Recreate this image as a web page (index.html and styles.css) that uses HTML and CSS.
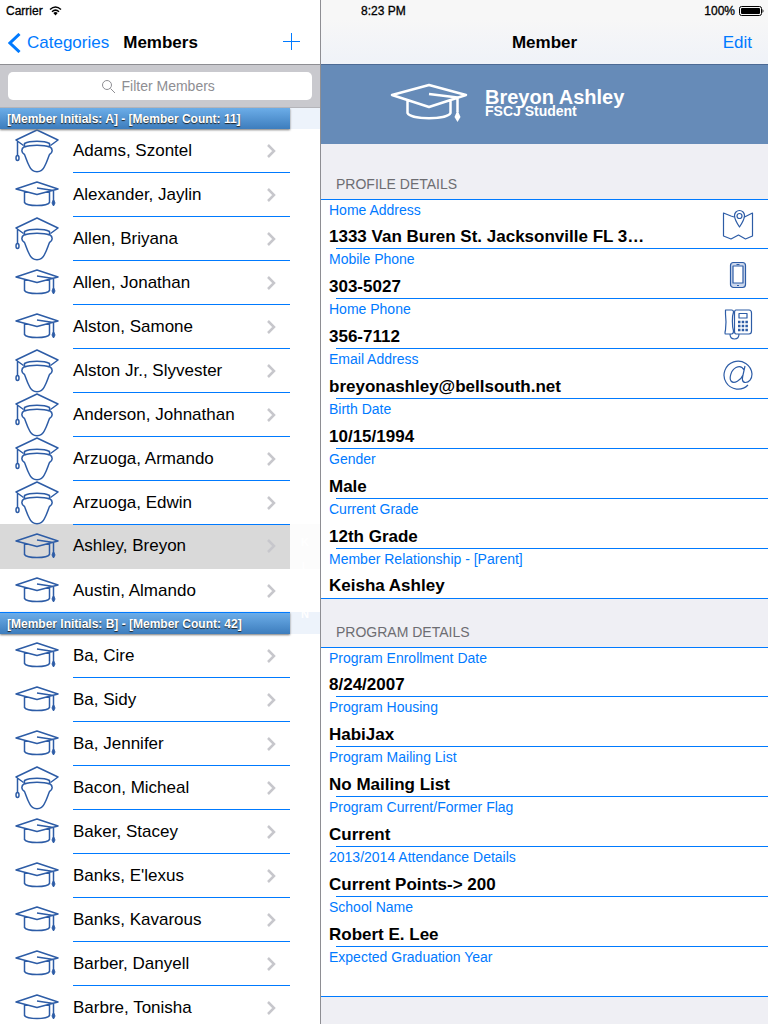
FILE: index.html
```html
<!DOCTYPE html>
<html lang="en">
<head>
<meta charset="utf-8">
<meta name="viewport" content="width=device-width, initial-scale=1">
<title>Members</title>
<link rel="stylesheet" href="styles.css">
</head>
<body>
<svg class="defs" aria-hidden="true">
  <symbol id="cap" viewBox="0 0 44 28">
    <path d="M1 8 22 1 43 8 22 13.500ZM9.500 10.500V21.500C12 25.500 32 25.500 34.500 21.500V10.500M22 7 38.500 9.500V20"/>
    <path class="solid" d="M38.500 18.500 37 22 38.500 25 40 22Z"/>
  </symbol>
  <symbol id="grad" viewBox="0 0 44 44">
    <path d="M8.500 16.500 1 11 22 1 43 11 35.500 16.500M9.500 18V14.500C15 11.500 29 11.500 34.500 14.500V18M9.500 18C15 15.500 29 15.500 34.500 18M9.500 17.500C5.500 20 6.500 24 9.500 25.500C11 29 12 33 14.500 37.500C17.500 44.500 26.500 44.500 29.500 37.500C32 33 33 29 34.500 25.500C37.500 24 38.500 20 34.500 17.500M2.500 12V26"/>
    <ellipse cx="2.500" cy="29" rx="1.500" ry="2.500"/>
  </symbol>
  <symbol id="chev" viewBox="0 0 10 14"><path d="M2 1 8 7 2 13"/></symbol>
</svg>
<div class="app">
  <aside class="master">
    <header class="bar">
      <div class="status"><span>Carrier</span>
        <svg class="wifi" width="13" height="10" viewBox="0 0 13 10"><path d="M1 3.500Q6.500-1.500 12 3.500M3 5.700Q6.500 2.500 10 5.700"/><path class="fill" d="M4.300 7Q6.500 5 8.700 7L6.500 9.500Z"/></svg>
      </div>
      <nav class="nav">
        <a class="back" href="#"><svg width="13" height="20" viewBox="0 0 13 20"><path d="M11.500 1 2 10 11.500 19"/></svg>Categories</a>
        <h1>Members</h1>
        <button class="add" type="button" aria-label="Add member"><svg width="18" height="18" viewBox="0 0 18 18"><path d="M9.500 1V18M1 9.500H18"/></svg></button>
      </nav>
    </header>
    <div class="search">
      <label class="field">
        <svg width="15" height="15" viewBox="0 0 15 15"><circle cx="6" cy="6" r="4.500"/><path d="M9.500 9.500 14 14"/></svg>
        <input type="search" placeholder="Filter Members" aria-label="Filter Members">
      </label>
    </div>
    <div class="members" id="members"></div>
    <div class="index"><a href="#">K</a><a href="#">L</a><a class="skip" href="#">N</a><a href="#">O</a></div>
  </aside>
  <main class="detail">
    <header class="bar">
      <div class="status"><span>8:23 PM</span>
        <span class="power">100%<svg width="25" height="10" viewBox="0 0 25 10"><rect class="outline" x=".5" y=".5" width="22" height="9" rx="2"/><rect x="2" y="2" width="19" height="6" rx="1"/><path d="M23.500 3Q25.500 5 23.500 7Z"/></svg></span>
      </div>
      <nav class="nav"><h1>Member</h1><button class="edit" type="button">Edit</button></nav>
    </header>
    <section class="hero">
      <svg class="hero-cap" viewBox="0 0 78 40"><path d="M2 12 39 2 76 12 39 24ZM17.500 17V30C21 37 57 37 60.500 30V17M39 11 67.500 14.500V29"/><path class="tassel" d="M67.500 27 64.500 34 67.500 39 70.500 34Z"/></svg>
      <div><h2>Breyon Ashley</h2><p>FSCJ Student</p></div>
    </section>
    <h3>PROFILE DETAILS</h3>
    <dl>
      <div class="row"><dt>Home Address</dt><dd>1333 Van Buren St. Jacksonville FL 3…</dd>
        <svg class="act" viewBox="0 0 32 32"><path d="M12 8 9 7 1.500 4V27L9 30 16.500 26 23.500 30 30.500 27V4L21.500 8.500M17.500 18C14.500 13.500 12.500 10.500 12.500 6.500A5 5 0 0 1 22.500 6.500C22.500 10.500 20.500 13.500 17.500 18Z"/><circle cx="17.500" cy="7" r="2.500"/></svg></div>
      <div class="row"><dt>Mobile Phone</dt><dd>303-5027</dd>
        <svg class="act" viewBox="0 0 32 32"><rect class="tint" x="8.500" y="4.500" width="15" height="25" rx="3"/><rect class="screen" x="11" y="8" width="10" height="17"/><path d="M14.500 6.500H17.500M15 27.500H17"/></svg></div>
      <div class="row"><dt>Home Phone</dt><dd>356-7112</dd>
        <svg class="act" viewBox="0 0 32 32"><path d="M3.500 2H9.500Q11.500 2 11.500 4C10 8 10 18 11.500 23Q11.500 26 9.500 26H3.500Q2.500 26 3.500 22Q4.500 14 3.500 6ZM14 2H27Q29.500 2 29.500 5V23Q29.500 26 27 26H14Q12.500 26 12.500 23V5Q12.500 2 14 2ZM8 26Q8 31 12.500 31Q17 31 17 26M17 5.500H25V10H17Z"/><path class="keys" d="M16 14H26M16 18H26M16 22H26"/></svg></div>
      <div class="row"><dt>Email Address</dt><dd>breyonashley@bellsouth.net</dd>
        <svg class="act" viewBox="0 0 32 32"><path d="M26 27A14 14 0 1 1 30 16C30 21 27 24.500 23.500 24.500C20 24.500 20 21 21 17L23 8M22 12C20 8 17 8 14 9.500C9 12 7 20 9 23C12 26.500 19 22 21 17"/></svg></div>
      <div class="row"><dt>Birth Date</dt><dd>10/15/1994</dd></div>
      <div class="row"><dt>Gender</dt><dd>Male</dd></div>
      <div class="row"><dt>Current Grade</dt><dd>12th Grade</dd></div>
      <div class="row"><dt>Member Relationship - [Parent]</dt><dd>Keisha Ashley</dd></div>
    </dl>
    <h3 class="second">PROGRAM DETAILS</h3>
    <dl>
      <div class="row"><dt>Program Enrollment Date</dt><dd>8/24/2007</dd></div>
      <div class="row"><dt>Program Housing</dt><dd>HabiJax</dd></div>
      <div class="row"><dt>Program Mailing List</dt><dd>No Mailing List</dd></div>
      <div class="row"><dt>Program Current/Former Flag</dt><dd>Current</dd></div>
      <div class="row"><dt>2013/2014 Attendance Details</dt><dd>Current Points-&gt; 200</dd></div>
      <div class="row"><dt>School Name</dt><dd>Robert E. Lee</dd></div>
      <div class="row"><dt>Expected Graduation Year</dt><dd></dd></div>
    </dl>
  </main>
</div>
<script src="members.js"></script>
</body>
</html>
```
FILE: styles.css
```css
* { box-sizing: border-box; }
body { margin: 0; font: 17px/20px "Liberation Sans", Arial, sans-serif; color: #000; background: #fff; }
h1, h2, h3, p, dl, dd, ul { margin: 0; padding: 0; }
svg { display: block; flex: none; fill: none; stroke: #2d5ca6; stroke-width: 1.5; stroke-linejoin: round; }
button { border: 0; background: none; padding: 0; font: inherit; color: #007aff; }
a { color: inherit; text-decoration: none; }
.defs { position: absolute; width: 0; height: 0; }
.app { display: grid; grid-template-columns: 321px 1fr; height: 100vh; overflow: hidden; }
.master { position: relative; display: flex; flex-direction: column; min-width: 0; min-height: 0; border-right: 1px solid #8e8e93; }
.detail { min-width: 0; background: #efeff4; }

.bar { height: 65px; flex: none; border-bottom: 1px solid #8e8e93; }
.detail .bar { background: linear-gradient(#f7f7f7 30%, #eff2f8); border-color: #4c6a94; }
.status { display: flex; align-items: center; gap: 6px; height: 22px; padding: 0 6px; font-size: 12px; -webkit-text-stroke: .3px; }
.wifi { stroke: #000; }
.wifi .fill { fill: #000; stroke: none; }
.detail .status { justify-content: space-between; padding: 0 4px 0 40px; }
.power { display: flex; align-items: center; gap: 4px; }
.power svg { fill: #000; stroke: none; }
.power .outline { fill: none; stroke: #000; stroke-width: 1; }
.nav { display: flex; align-items: center; height: 42px; }
.nav h1 { font-size: 17px; line-height: 20px; }
.back { display: flex; align-items: center; gap: 6px; padding-left: 8px; color: #007aff; }
.back svg { stroke: #007aff; stroke-width: 3; stroke-linejoin: miter; }
.master h1 { margin-left: 14px; }
.add { margin: 0 20px 4px auto; }
.add svg { stroke: #007aff; stroke-width: 1; }
.detail .nav { display: grid; grid-template-columns: 1fr auto 1fr; padding: 0 16px; }
.detail h1 { grid-column: 2; }
.edit { justify-self: end; }

.search { flex: none; padding: 7px 8px; background: #c9c9ce; border-bottom: 1px solid #b4b4b9; }
.field { display: flex; align-items: center; justify-content: center; gap: 6px; height: 28px; border-radius: 5px; background: #fff; }
.field svg { stroke: #8e8e93; stroke-width: 1; }
.field input { width: 98px; border: 0; padding: 0; outline: 0; background: none; appearance: none; font: 14px/20px "Liberation Sans", Arial, sans-serif; }
.field input::-webkit-search-cancel-button { display: none; }
.field input::placeholder { color: #8e8e93; opacity: 1; }

.members { flex: 1; min-height: 0; overflow: hidden; }
.group { position: relative; height: 21px; padding-right: 30px; background: #edf3fb; }
.group h2 { height: 100%; padding: 1px 7px 0; font-size: 12px; line-height: 20px; color: #fff; text-shadow: 0 1px 1px #222; background: linear-gradient(#6cade8, #3d7dbd); box-shadow: 0 1px 2px #777; }
.group.later { height: 22px; margin-top: -1px; }
.group.later h2 { border-top: 1px solid #007aff; }
.list { list-style: none; }
.list li { height: 44px; padding-right: 30px; }
.list a { display: flex; height: 100%; padding-left: 15px; gap: 14px; }
.list a > svg { align-self: center; width: 44px; }
.cap { height: 28px; }
.grad { height: 44px; }
.name { display: flex; align-items: center; justify-content: space-between; flex: 1; padding-right: 14px; border-bottom: 1px solid #007aff; white-space: nowrap; }
.list li:last-child .name { border-color: transparent; }
.list .selected { height: 45px; margin-top: -1px; background: #fcfcfc; }
.selected a { background: #d9d9d9; }
.list .selected .name { border-color: #d9d9d9; }
.chev { width: 10px; height: 14px; stroke: #c7c7cc; stroke-width: 2.500; stroke-linejoin: miter; }
.solid { fill: #2d5ca6; stroke-width: 1; }
.index { position: absolute; top: 530px; right: 0; width: 30px; display: flex; flex-direction: column; text-align: center; font-size: 11px; font-weight: 700; line-height: 24px; color: #fff; }
.index .skip { margin-top: 24px; }

.hero { display: flex; align-items: center; gap: 17px; height: 79px; padding: 0 0 4px 69px; color: #fff; background: #668bb8; }
.hero-cap { width: 78px; height: 40px; stroke: #fff; stroke-width: 2.500; }
.hero .tassel { fill: #fff; stroke: none; }
.hero h2 { font-size: 20px; line-height: 16px; }
.hero p { font-size: 14px; line-height: 12px; font-weight: 700; }
.detail h3 { display: flex; align-items: flex-end; height: 55px; padding: 0 15px 5px; font-size: 14px; font-weight: 400; color: #6d6d72; }
.detail h3.second { height: 48px; }
.detail dl { background: #fff; border-top: 1px solid #007aff; border-bottom: 1px solid #007aff; }
.row { display: grid; grid-template-columns: 1fr auto; height: 50px; padding: 0 14px 0 8px; background: linear-gradient(#007aff, #007aff) 15px 100% / 100% 1px no-repeat; }
.row:first-child { height: 49px; }
.row:last-child { height: 49px; background: none; }
.row dt { color: #007aff; font-size: 14px; line-height: 20px; }
.row dd { grid-column: 1; align-self: end; height: 22px; font-weight: 700; white-space: nowrap; }
.act { grid-column: 2; grid-row: 1 / 3; align-self: center; width: 32px; height: 32px; stroke-width: 1.200; }
.act .tint { fill: #cdd8ec; }
.act .screen { fill: #fff; }
.act .keys { stroke-width: 2.500; stroke-dasharray: 2.500 1.200; }
```
FILE: members.js
```javascript
const groups = [
  { title: "[Member Initials: A] - [Member Count: 11]", members: [
    ["Adams, Szontel", "grad"], ["Alexander, Jaylin", "cap"], ["Allen, Briyana", "grad"],
    ["Allen, Jonathan", "cap"], ["Alston, Samone", "cap"], ["Alston Jr., Slyvester", "grad"],
    ["Anderson, Johnathan", "grad"], ["Arzuoga, Armando", "grad"], ["Arzuoga, Edwin", "grad"],
    ["Ashley, Breyon", "cap"], ["Austin, Almando", "cap"]] },
  { title: "[Member Initials: B] - [Member Count: 42]", members: [
    ["Ba, Cire", "cap"], ["Ba, Sidy", "cap"], ["Ba, Jennifer", "cap"], ["Bacon, Micheal", "grad"],
    ["Baker, Stacey", "cap"], ["Banks, E'lexus", "cap"], ["Banks, Kavarous", "cap"],
    ["Barber, Danyell", "cap"], ["Barbre, Tonisha", "cap"]] }
];
document.getElementById("members").innerHTML = groups.map((g, i) => `
  <div class="group${i ? " later" : ""}"><h2>${g.title}</h2></div>
  <ul class="list">${g.members.map(([name, icon]) => `
    <li class="${name === "Ashley, Breyon" ? "selected" : ""}">
      <a href="#"><svg class="${icon}"><use href="#${icon}"/></svg>
      <span class="name">${name}<svg class="chev"><use href="#chev"/></svg></span></a>
    </li>`).join("")}</ul>`).join("");
```
